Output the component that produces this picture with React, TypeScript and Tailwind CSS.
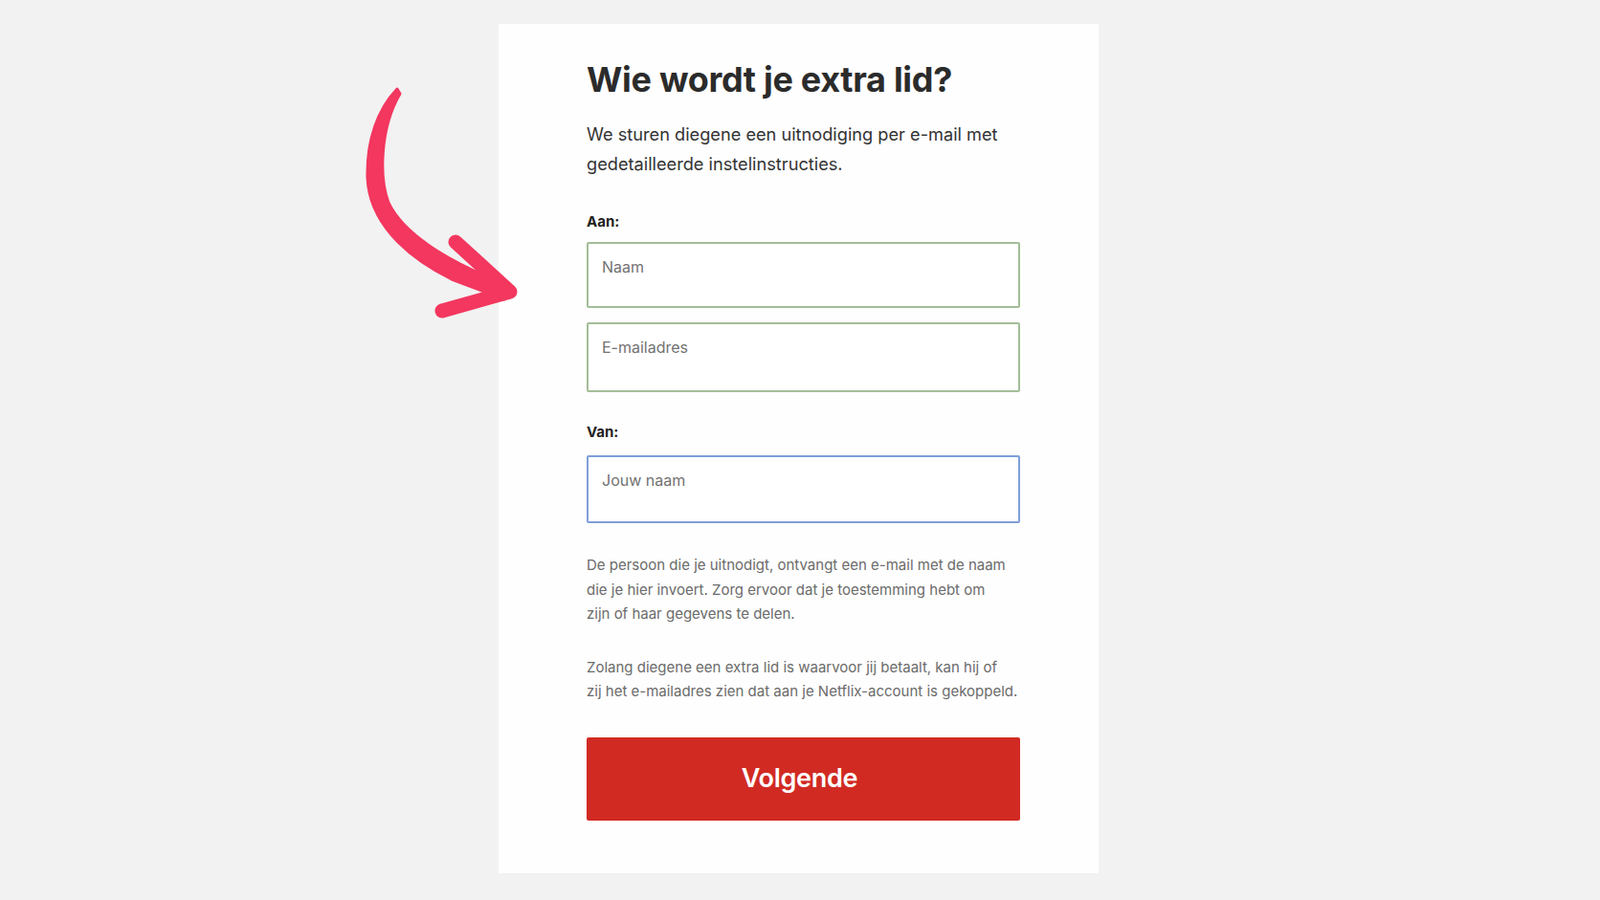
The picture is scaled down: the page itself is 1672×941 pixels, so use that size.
import React from 'react';

const FONT = { fontFamily: 'Inter, "Noto Sans", "Liberation Sans", sans-serif' };

function HandArrow() {
  return (
    <svg
      className="absolute left-0 top-0 pointer-events-none"
      width="600"
      height="360"
      viewBox="0 0 600 360"
    >
      <path
        d="M 415 93 C 395 114, 383 146, 384 186 C 386 230, 420 266, 472 292 L 527 313 L 532 298 C 482 280, 424 250, 406 212 C 396 185, 397 134, 418 98 Z"
        fill="#f3375f"
        stroke="#f3375f"
        strokeWidth="3"
        strokeLinejoin="round"
      />
      <path
        d="M 476 253 L 533 305 L 462 325"
        fill="none"
        stroke="#f3375f"
        strokeWidth="15"
        strokeLinecap="round"
        strokeLinejoin="round"
      />
    </svg>
  );
}

function Field({ placeholder, height, border }: { placeholder: string; height: string; border: string }) {
  return (
    <div className={`w-full rounded-[2px] border-2 bg-white pl-[14px] pr-4 pt-[12px] ${height} ${border}`}>
      <input
        className="h-6 w-full bg-transparent text-[16px] leading-6 text-[#333] outline-none placeholder:text-[#727272]"
        placeholder={placeholder}
      />
    </div>
  );
}

export default function App() {
  return (
    <div className="relative flex min-h-screen w-full justify-center bg-[#f2f2f2] pr-[3px] pt-[25px]" style={FONT}>
      <HandArrow />
      <div className="h-[888px] w-[627px] bg-[#fefefe] pb-[55px] pl-[92px] pr-[82px] pt-[36px]">
        <h1 className="text-[36px] font-bold leading-[44px] tracking-[-0.3px] text-[#2b2b2b]">Wie wordt je extra lid?</h1>
        <p className="mt-[20px] text-[18.2px] leading-[31px] text-[#333]">
          We sturen diegene een uitnodiging per e-mail met
          <br />
          gedetailleerde instelinstructies.
        </p>

        <div className="mt-[35px] text-[15px] font-bold leading-5 text-[#222]">Aan:</div>
        <div className="mt-[11px] flex flex-col gap-[15px]">
          <Field placeholder="Naam" height="h-[69px]" border="border-[#a3bd97]" />
          <Field placeholder="E-mailadres" height="h-[73px]" border="border-[#a3bd97]" />
        </div>

        <div className="mt-[32px] text-[15px] font-bold leading-5 text-[#222]">Van:</div>
        <div className="mt-[14px]">
          <Field placeholder="Jouw naam" height="h-[71px]" border="border-[#7f9fd8]" />
        </div>

        <p className="mt-[31px] text-[15px] leading-[25.5px] text-[#6b6b6b]">
          De persoon die je uitnodigt, ontvangt een e-mail met de naam
          <br />
          die je hier invoert. Zorg ervoor dat je toestemming hebt om
          <br />
          zijn of haar gegevens te delen.
        </p>
        <p className="mt-[30px] text-[15px] leading-[25.5px] text-[#6b6b6b]">
          Zolang diegene een extra lid is waarvoor jij betaalt, kan hij of
          <br />
          zij het e-mailadres zien dat aan je Netflix-account is gekoppeld.
        </p>

        <button className="mt-[35px] flex h-[87px] w-full items-center justify-center rounded-[2px] bg-[#d12a23] pr-2 text-[27px] font-semibold tracking-[-0.3px] text-white">
          Volgende
        </button>
      </div>
    </div>
  );
}
